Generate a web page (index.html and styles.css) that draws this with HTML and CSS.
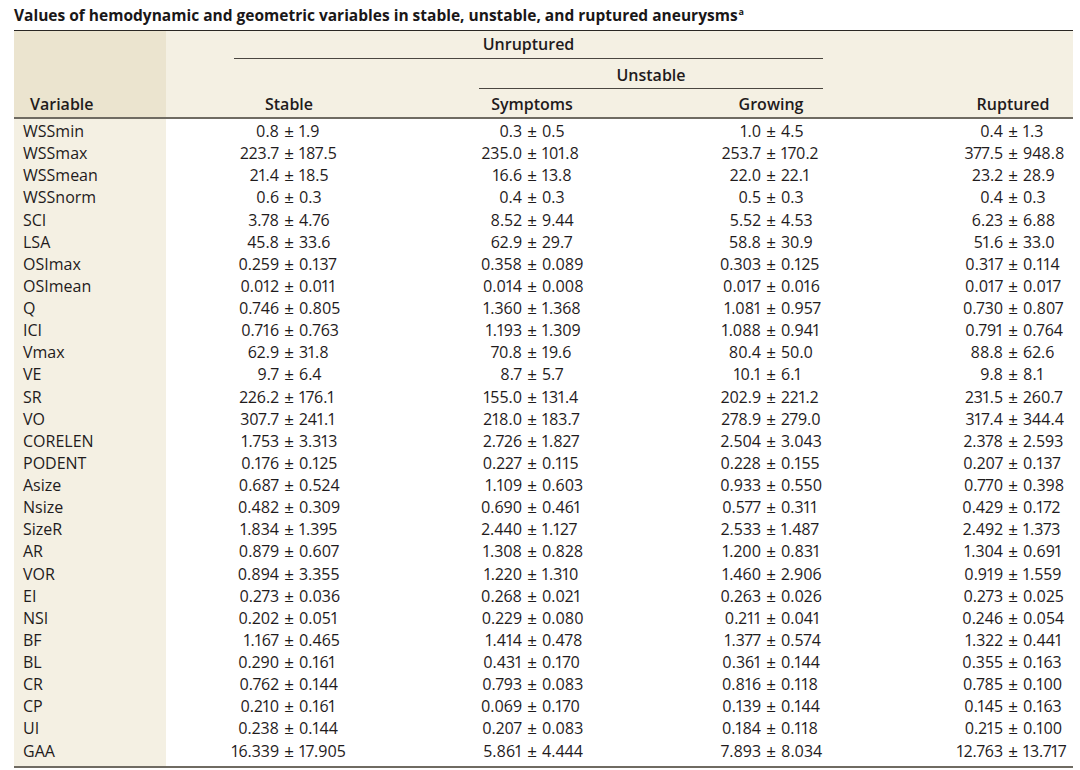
FILE: index.html
```html
<!DOCTYPE html>
<html lang="en">
<head>
<meta charset="utf-8">
<title>Values of hemodynamic and geometric variables</title>
<link rel="stylesheet" href="styles.css">
</head>
<body>
<div class="page">
  <h1 class="title">Values of hemodynamic and geometric variables in stable, unstable, and ruptured aneurysms<sup>a</sup></h1>
  <table class="data">
    <colgroup>
      <col class="c-var"><col class="c-stable"><col class="c-sym"><col class="c-grow"><col class="c-rup">
    </colgroup>
    <thead>
      <tr class="h1">
        <th class="var" rowspan="3">Variable</th>
        <th colspan="3"><div class="span-label">Unruptured</div></th>
        <th class="rup" rowspan="3">Ruptured</th>
      </tr>
      <tr class="h2">
        <th></th>
        <th colspan="2"><div class="span-label sub">Unstable</div></th>
      </tr>
      <tr class="h3">
        <th>Stable</th>
        <th>Symptoms</th>
        <th>Growing</th>
      </tr>
    </thead>
    <tbody>
      <tr><td class="var">WSSmin</td><td><span class="a">0.8</span><span class="pm">±</span><span class="b">1.9</span></td><td><span class="a">0.3</span><span class="pm">±</span><span class="b">0.5</span></td><td><span class="a">1.0</span><span class="pm">±</span><span class="b">4.5</span></td><td class="rup"><span class="a">0.4</span><span class="pm">±</span><span class="b">1.3</span></td></tr>
      <tr><td class="var">WSSmax</td><td><span class="a">223.7</span><span class="pm">±</span><span class="b">187.5</span></td><td><span class="a">235.0</span><span class="pm">±</span><span class="b">101.8</span></td><td><span class="a">253.7</span><span class="pm">±</span><span class="b">170.2</span></td><td class="rup"><span class="a">377.5</span><span class="pm">±</span><span class="b">948.8</span></td></tr>
      <tr><td class="var">WSSmean</td><td><span class="a">21.4</span><span class="pm">±</span><span class="b">18.5</span></td><td><span class="a">16.6</span><span class="pm">±</span><span class="b">13.8</span></td><td><span class="a">22.0</span><span class="pm">±</span><span class="b">22.1</span></td><td class="rup"><span class="a">23.2</span><span class="pm">±</span><span class="b">28.9</span></td></tr>
      <tr><td class="var">WSSnorm</td><td><span class="a">0.6</span><span class="pm">±</span><span class="b">0.3</span></td><td><span class="a">0.4</span><span class="pm">±</span><span class="b">0.3</span></td><td><span class="a">0.5</span><span class="pm">±</span><span class="b">0.3</span></td><td class="rup"><span class="a">0.4</span><span class="pm">±</span><span class="b">0.3</span></td></tr>
      <tr><td class="var">SCI</td><td><span class="a">3.78</span><span class="pm">±</span><span class="b">4.76</span></td><td><span class="a">8.52</span><span class="pm">±</span><span class="b">9.44</span></td><td><span class="a">5.52</span><span class="pm">±</span><span class="b">4.53</span></td><td class="rup"><span class="a">6.23</span><span class="pm">±</span><span class="b">6.88</span></td></tr>
      <tr><td class="var">LSA</td><td><span class="a">45.8</span><span class="pm">±</span><span class="b">33.6</span></td><td><span class="a">62.9</span><span class="pm">±</span><span class="b">29.7</span></td><td><span class="a">58.8</span><span class="pm">±</span><span class="b">30.9</span></td><td class="rup"><span class="a">51.6</span><span class="pm">±</span><span class="b">33.0</span></td></tr>
      <tr><td class="var">OSImax</td><td><span class="a">0.259</span><span class="pm">±</span><span class="b">0.137</span></td><td><span class="a">0.358</span><span class="pm">±</span><span class="b">0.089</span></td><td><span class="a">0.303</span><span class="pm">±</span><span class="b">0.125</span></td><td class="rup"><span class="a">0.317</span><span class="pm">±</span><span class="b">0.114</span></td></tr>
      <tr><td class="var">OSImean</td><td><span class="a">0.012</span><span class="pm">±</span><span class="b">0.011</span></td><td><span class="a">0.014</span><span class="pm">±</span><span class="b">0.008</span></td><td><span class="a">0.017</span><span class="pm">±</span><span class="b">0.016</span></td><td class="rup"><span class="a">0.017</span><span class="pm">±</span><span class="b">0.017</span></td></tr>
      <tr><td class="var">Q</td><td><span class="a">0.746</span><span class="pm">±</span><span class="b">0.805</span></td><td><span class="a">1.360</span><span class="pm">±</span><span class="b">1.368</span></td><td><span class="a">1.081</span><span class="pm">±</span><span class="b">0.957</span></td><td class="rup"><span class="a">0.730</span><span class="pm">±</span><span class="b">0.807</span></td></tr>
      <tr><td class="var">ICI</td><td><span class="a">0.716</span><span class="pm">±</span><span class="b">0.763</span></td><td><span class="a">1.193</span><span class="pm">±</span><span class="b">1.309</span></td><td><span class="a">1.088</span><span class="pm">±</span><span class="b">0.941</span></td><td class="rup"><span class="a">0.791</span><span class="pm">±</span><span class="b">0.764</span></td></tr>
      <tr><td class="var">Vmax</td><td><span class="a">62.9</span><span class="pm">±</span><span class="b">31.8</span></td><td><span class="a">70.8</span><span class="pm">±</span><span class="b">19.6</span></td><td><span class="a">80.4</span><span class="pm">±</span><span class="b">50.0</span></td><td class="rup"><span class="a">88.8</span><span class="pm">±</span><span class="b">62.6</span></td></tr>
      <tr><td class="var">VE</td><td><span class="a">9.7</span><span class="pm">±</span><span class="b">6.4</span></td><td><span class="a">8.7</span><span class="pm">±</span><span class="b">5.7</span></td><td><span class="a">10.1</span><span class="pm">±</span><span class="b">6.1</span></td><td class="rup"><span class="a">9.8</span><span class="pm">±</span><span class="b">8.1</span></td></tr>
      <tr><td class="var">SR</td><td><span class="a">226.2</span><span class="pm">±</span><span class="b">176.1</span></td><td><span class="a">155.0</span><span class="pm">±</span><span class="b">131.4</span></td><td><span class="a">202.9</span><span class="pm">±</span><span class="b">221.2</span></td><td class="rup"><span class="a">231.5</span><span class="pm">±</span><span class="b">260.7</span></td></tr>
      <tr><td class="var">VO</td><td><span class="a">307.7</span><span class="pm">±</span><span class="b">241.1</span></td><td><span class="a">218.0</span><span class="pm">±</span><span class="b">183.7</span></td><td><span class="a">278.9</span><span class="pm">±</span><span class="b">279.0</span></td><td class="rup"><span class="a">317.4</span><span class="pm">±</span><span class="b">344.4</span></td></tr>
      <tr><td class="var">CORELEN</td><td><span class="a">1.753</span><span class="pm">±</span><span class="b">3.313</span></td><td><span class="a">2.726</span><span class="pm">±</span><span class="b">1.827</span></td><td><span class="a">2.504</span><span class="pm">±</span><span class="b">3.043</span></td><td class="rup"><span class="a">2.378</span><span class="pm">±</span><span class="b">2.593</span></td></tr>
      <tr><td class="var">PODENT</td><td><span class="a">0.176</span><span class="pm">±</span><span class="b">0.125</span></td><td><span class="a">0.227</span><span class="pm">±</span><span class="b">0.115</span></td><td><span class="a">0.228</span><span class="pm">±</span><span class="b">0.155</span></td><td class="rup"><span class="a">0.207</span><span class="pm">±</span><span class="b">0.137</span></td></tr>
      <tr><td class="var">Asize</td><td><span class="a">0.687</span><span class="pm">±</span><span class="b">0.524</span></td><td><span class="a">1.109</span><span class="pm">±</span><span class="b">0.603</span></td><td><span class="a">0.933</span><span class="pm">±</span><span class="b">0.550</span></td><td class="rup"><span class="a">0.770</span><span class="pm">±</span><span class="b">0.398</span></td></tr>
      <tr><td class="var">Nsize</td><td><span class="a">0.482</span><span class="pm">±</span><span class="b">0.309</span></td><td><span class="a">0.690</span><span class="pm">±</span><span class="b">0.461</span></td><td><span class="a">0.577</span><span class="pm">±</span><span class="b">0.311</span></td><td class="rup"><span class="a">0.429</span><span class="pm">±</span><span class="b">0.172</span></td></tr>
      <tr><td class="var">SizeR</td><td><span class="a">1.834</span><span class="pm">±</span><span class="b">1.395</span></td><td><span class="a">2.440</span><span class="pm">±</span><span class="b">1.127</span></td><td><span class="a">2.533</span><span class="pm">±</span><span class="b">1.487</span></td><td class="rup"><span class="a">2.492</span><span class="pm">±</span><span class="b">1.373</span></td></tr>
      <tr><td class="var">AR</td><td><span class="a">0.879</span><span class="pm">±</span><span class="b">0.607</span></td><td><span class="a">1.308</span><span class="pm">±</span><span class="b">0.828</span></td><td><span class="a">1.200</span><span class="pm">±</span><span class="b">0.831</span></td><td class="rup"><span class="a">1.304</span><span class="pm">±</span><span class="b">0.691</span></td></tr>
      <tr><td class="var">VOR</td><td><span class="a">0.894</span><span class="pm">±</span><span class="b">3.355</span></td><td><span class="a">1.220</span><span class="pm">±</span><span class="b">1.310</span></td><td><span class="a">1.460</span><span class="pm">±</span><span class="b">2.906</span></td><td class="rup"><span class="a">0.919</span><span class="pm">±</span><span class="b">1.559</span></td></tr>
      <tr><td class="var">EI</td><td><span class="a">0.273</span><span class="pm">±</span><span class="b">0.036</span></td><td><span class="a">0.268</span><span class="pm">±</span><span class="b">0.021</span></td><td><span class="a">0.263</span><span class="pm">±</span><span class="b">0.026</span></td><td class="rup"><span class="a">0.273</span><span class="pm">±</span><span class="b">0.025</span></td></tr>
      <tr><td class="var">NSI</td><td><span class="a">0.202</span><span class="pm">±</span><span class="b">0.051</span></td><td><span class="a">0.229</span><span class="pm">±</span><span class="b">0.080</span></td><td><span class="a">0.211</span><span class="pm">±</span><span class="b">0.041</span></td><td class="rup"><span class="a">0.246</span><span class="pm">±</span><span class="b">0.054</span></td></tr>
      <tr><td class="var">BF</td><td><span class="a">1.167</span><span class="pm">±</span><span class="b">0.465</span></td><td><span class="a">1.414</span><span class="pm">±</span><span class="b">0.478</span></td><td><span class="a">1.377</span><span class="pm">±</span><span class="b">0.574</span></td><td class="rup"><span class="a">1.322</span><span class="pm">±</span><span class="b">0.441</span></td></tr>
      <tr><td class="var">BL</td><td><span class="a">0.290</span><span class="pm">±</span><span class="b">0.161</span></td><td><span class="a">0.431</span><span class="pm">±</span><span class="b">0.170</span></td><td><span class="a">0.361</span><span class="pm">±</span><span class="b">0.144</span></td><td class="rup"><span class="a">0.355</span><span class="pm">±</span><span class="b">0.163</span></td></tr>
      <tr><td class="var">CR</td><td><span class="a">0.762</span><span class="pm">±</span><span class="b">0.144</span></td><td><span class="a">0.793</span><span class="pm">±</span><span class="b">0.083</span></td><td><span class="a">0.816</span><span class="pm">±</span><span class="b">0.118</span></td><td class="rup"><span class="a">0.785</span><span class="pm">±</span><span class="b">0.100</span></td></tr>
      <tr><td class="var">CP</td><td><span class="a">0.210</span><span class="pm">±</span><span class="b">0.161</span></td><td><span class="a">0.069</span><span class="pm">±</span><span class="b">0.170</span></td><td><span class="a">0.139</span><span class="pm">±</span><span class="b">0.144</span></td><td class="rup"><span class="a">0.145</span><span class="pm">±</span><span class="b">0.163</span></td></tr>
      <tr><td class="var">UI</td><td><span class="a">0.238</span><span class="pm">±</span><span class="b">0.144</span></td><td><span class="a">0.207</span><span class="pm">±</span><span class="b">0.083</span></td><td><span class="a">0.184</span><span class="pm">±</span><span class="b">0.118</span></td><td class="rup"><span class="a">0.215</span><span class="pm">±</span><span class="b">0.100</span></td></tr>
      <tr class="last"><td class="var">GAA</td><td><span class="a">16.339</span><span class="pm">±</span><span class="b">17.905</span></td><td><span class="a">5.861</span><span class="pm">±</span><span class="b">4.444</span></td><td><span class="a">7.893</span><span class="pm">±</span><span class="b">8.034</span></td><td class="rup"><span class="a">12.763</span><span class="pm">±</span><span class="b">13.717</span></td></tr>
    </tbody>
  </table>
</div>
</body>
</html>
```

FILE: styles.css
```css
html, body {
  margin: 0;
  padding: 0;
  background: #ffffff;
}

body {
  font-family: "Open Sans", "Liberation Sans", sans-serif;
  color: #1f1b1c;
}

.page {
  padding: 5px 7px 0 14px;
}

.title {
  margin: 0;
  height: 25px;
  font-size: 15.5px;
  line-height: 20px;
  font-weight: 700;
  color: #1a1718;
  white-space: nowrap;
}

.title sup {
  font-size: 9px;
  line-height: 0;
  vertical-align: 6px;
  margin-left: 1px;
}

.data {
  width: 1059px;
  border-collapse: collapse;
  table-layout: fixed;
  border-top: 1.5px solid #2a2724;
  border-bottom: 2px solid #6f6b62;
  font-size: 16px;
  font-variant-numeric: proportional-nums;
}

.c-var { width: 152px; }
.c-stable { width: 246px; }
.c-sym { width: 240px; }
.c-grow { width: 238px; }
.c-rup { width: 183px; }

thead th {
  background: #f4f0e3;
  padding: 0;
  font-weight: 600;
  font-size: 16px;
  line-height: 26px;
  color: #1f1b1c;
  text-align: center;
  vertical-align: bottom;
}

thead th.var {
  background: #ebe4cf;
  text-align: left;
  padding-left: 16px;
}

thead th.rup {
  padding-left: 63px;
}

.span-label {
  height: 27px;
  line-height: 27px;
  margin: 0 67px 0 68px;
  border-bottom: 1px solid #4a4640;
}

.span-label.sub {
  height: 26px;
  padding-top: 3px;
  margin-left: 67px;
}

.h3 th {
  height: 28px;
  padding-top: 2px;
  box-sizing: border-box;
}

thead tr:last-child th,
thead th.var,
thead th.rup {
  border-bottom: 2px solid #6f6b62;
}

tbody td {
  height: 22.14px;
  padding: 0;
  line-height: 22px;
  text-align: center;
  white-space: nowrap;
  font-size: 16px;
}

tbody tr:first-child td {
  padding-top: 1px;
}

tbody tr.last td {
  padding-bottom: 4px;
}

tbody td.var {
  background: #f4f0e3;
  text-align: left;
  padding-left: 9px;
}

tbody td.rup {
  padding-left: 63px;
}

td .a,
td .b,
td .pm {
  display: inline-block;
}

td .a {
  width: calc(50% - 10px);
  text-align: right;
}

td .pm {
  width: 20px;
  text-align: center;
  font-size: 17px;
}

td .b {
  width: calc(50% - 10px);
  text-align: left;
}
```
